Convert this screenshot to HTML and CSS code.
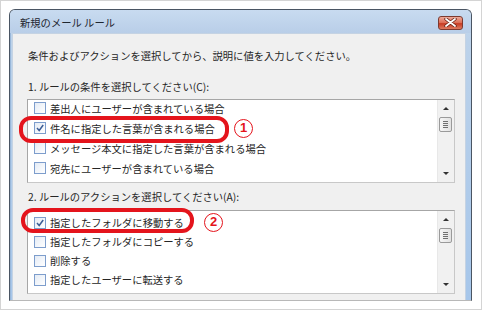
FILE: index.html
```html
<!DOCTYPE html>
<html lang="ja">
<head>
    <meta charset="UTF-8">
    <meta name="viewport" content="width=device-width, initial-scale=1.0">
    <title>新規のメール ルール</title>
    <link rel="stylesheet" href="styles.css">
</head>
<body>

    <div class="shot">
        <div class="dialog">
            <div class="titlebar">
                <span class="title">新規のメール ルール</span>
                <span class="close">
                    <svg width="13" height="9" viewBox="0 0 13 9">
                        <path d="M2 1 L11 8 M11 1 L2 8" stroke="#6b2418" stroke-width="3.4" stroke-linecap="round"/>
                        <path d="M2 1 L11 8 M11 1 L2 8" stroke="#fff" stroke-width="1.8" stroke-linecap="round"/>
                    </svg>
                </span>
            </div>

            <div class="frame">
                <div class="client">
                    <p class="intro">条件およびアクションを選択してから、説明に値を入力してください。</p>

                    <!-- 条件 -->
                    <p class="label">1. ルールの条件を選択してください(C):</p>
                    <div class="listwrap">
                        <div class="list">
                            <ul class="items items-a">
                                <li><span class="box"></span>差出人にユーザーが含まれている場合</li>
                                <li><span class="box checked"><svg width="10" height="10" viewBox="0 0 10 10"><path d="M2 5 L4.2 7.5 L8.2 2" fill="none" stroke="#3b5d96" stroke-width="1.5"/></svg></span>件名に指定した言葉が含まれる場合</li>
                                <li><span class="box"></span>メッセージ本文に指定した言葉が含まれる場合</li>
                                <li><span class="box"></span>宛先にユーザーが含まれている場合</li>
                                <li><span class="box"></span>CC にユーザーが含まれている場合</li>
                            </ul>
                            <div class="scroll">
                                <span class="arrow up"></span>
                                <span class="thumb"><i></i><i></i><i></i><i></i></span>
                                <span class="arrow down"></span>
                            </div>
                        </div>
                        <div class="ring ring-a"></div>
                        <span class="num num-a">1</span>
                    </div>

                    <!-- アクション -->
                    <p class="label label-b">2. ルールのアクションを選択してください(A):</p>
                    <div class="listwrap">
                        <div class="list">
                            <ul class="items items-b">
                                <li><span class="box checked"><svg width="10" height="10" viewBox="0 0 10 10"><path d="M2 5 L4.2 7.5 L8.2 2" fill="none" stroke="#3b5d96" stroke-width="1.5"/></svg></span>指定したフォルダに移動する</li>
                                <li><span class="box"></span>指定したフォルダにコピーする</li>
                                <li><span class="box"></span>削除する</li>
                                <li><span class="box"></span>指定したユーザーに転送する</li>
                                <li><span class="box"></span>送信した名前を付けて保存する</li>
                            </ul>
                            <div class="scroll">
                                <span class="arrow up"></span>
                                <span class="thumb"><i></i><i></i><i></i><i></i></span>
                                <span class="arrow down"></span>
                            </div>
                        </div>
                        <div class="ring ring-b"></div>
                        <span class="num num-b">2</span>
                    </div>
                </div>
            </div>
        </div>
    </div>

</body>
</html>
```

FILE: styles.css
```css
body {
    margin: 0;
    padding: 0;
    background-color: #ffffff;
    font-family: "Noto Sans CJK JP", "Noto Sans", sans-serif;
}
.shot {
    box-sizing: border-box;
    width: 482px;
    height: 310px;
    padding: 8px 9px 0 8px;
    border: 1px solid #d4d4d4;
    overflow: hidden;
}
.dialog {
    box-sizing: border-box;
    height: 292px;
    border: 1px solid #4a5563;
    border-bottom: 1px solid #b8b8b8;
    border-radius: 6px 6px 0 0;
    background: linear-gradient(to bottom, #c6d9ee, #bcd2ea 30px, #a6c6ea);
    display: flex;
    flex-direction: column;
}
.titlebar {
    height: 23px;
    display: flex;
    align-items: center;
    justify-content: space-between;
    padding: 0 8px 0 10px;
    border-radius: 5px 5px 0 0;
    background: linear-gradient(to bottom, #c8dbf0, #b9cee8);
}
.title {
    font-size: 10.3px;
    color: #1f2630;
    margin-top: 1px;
}
.close {
    box-sizing: border-box;
    width: 25px;
    height: 14px;
    margin-top: 2px;
    border: 1px solid #7c3a30;
    border-radius: 3px;
    background: linear-gradient(to bottom, #eeaa9a, #dc6a52 50%, #c73a22 55%, #de7c62);
    display: flex;
    align-items: center;
    justify-content: center;
}
.frame {
    flex: 1;
    display: flex;
    padding: 0 5px 0 1px;
    border-left: 1px solid #9ab8da;
}
.client {
    flex: 1;
    box-sizing: border-box;
    background-color: #f0f0f0;
    border: 1px solid #c5d3e3;
    border-bottom: none;
    padding: 14px 10px 0 14px;
    color: #262626;
    font-size: 10.3px;
}
.intro {
    margin: 0;
    padding-left: 1px;
    line-height: 16px;
}
.label {
    margin: 15px 0 4px 0;
    padding-left: 1px;
    line-height: 16px;
}
.label-b {
    margin-top: 6px;
    margin-bottom: 5px;
}
.listwrap {
    position: relative;
}
.list {
    box-sizing: border-box;
    height: 84px;
    border: 1px solid #a6a6a6;
    border-right-color: #c8c8c8;
    border-bottom-color: #c8c8c8;
    background-color: #ffffff;
    display: flex;
    overflow: hidden;
}
.items {
    flex: 1;
    list-style: none;
    margin: 0;
    padding: 0 0 0 6px;
}
.items-a {
    margin-top: -2px;
}
.items-b {
    padding-top: 2px;
}
.items li {
    display: flex;
    align-items: center;
    height: 20px;
    white-space: nowrap;
}
.items-b li {
    height: 19px;
}
.box {
    box-sizing: border-box;
    width: 12px;
    height: 12px;
    margin-right: 4px;
    border: 1px solid #7d9dcc;
    background: linear-gradient(135deg, #e4ebf5, #ffffff);
    display: flex;
    align-items: center;
    justify-content: center;
}
.scroll {
    width: 16px;
    background-color: #f1f1f1;
    border-left: 1px solid #e8e8e8;
    position: relative;
}
.arrow {
    position: absolute;
    left: 5px;
    width: 0;
    height: 0;
    border-left: 3px solid transparent;
    border-right: 3px solid transparent;
}
.arrow.up {
    top: 7px;
    border-bottom: 3px solid #333;
}
.arrow.down {
    bottom: 7px;
    border-top: 3px solid #333;
}
.thumb {
    position: absolute;
    left: 1px;
    top: 17px;
    box-sizing: border-box;
    width: 13px;
    height: 15px;
    border: 1px solid #9a9a9a;
    border-radius: 2px;
    background: linear-gradient(to right, #f6f6f6, #e2e2e2);
    display: flex;
    flex-direction: column;
    align-items: center;
    justify-content: center;
    gap: 1px;
}
.thumb i {
    display: block;
    width: 5px;
    height: 1px;
    background-color: #707070;
}
.ring {
    position: absolute;
    box-sizing: border-box;
    border: 4px solid #e4141c;
    border-radius: 12px;
}
.ring-a {
    left: -8px;
    top: 17px;
    width: 210px;
    height: 27px;
}
.ring-b {
    left: -6px;
    top: -2px;
    width: 173px;
    height: 25px;
}
.num {
    position: absolute;
    box-sizing: border-box;
    width: 19px;
    height: 19px;
    border: 1.6px solid #e4141c;
    border-radius: 50%;
    color: #e4141c;
    font-family: "Liberation Sans", sans-serif;
    font-weight: bold;
    font-size: 13px;
    line-height: 16px;
    text-align: center;
}
.num-a {
    left: 207px;
    top: 20px;
}
.num-b {
    left: 177px;
    top: 3px;
}
```
